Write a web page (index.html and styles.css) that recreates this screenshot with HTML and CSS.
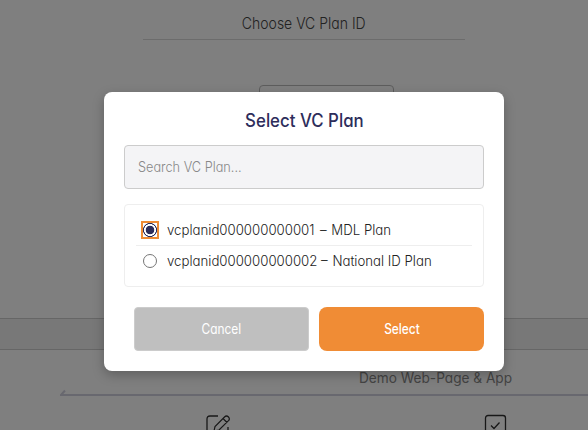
FILE: index.html
```html
<!DOCTYPE html>
<html lang="en">
<head>
<meta charset="utf-8">
<title>Select VC Plan</title>
<link rel="stylesheet" href="styles.css">
</head>
<body>
<main class="page">
  <section class="chooser">
    <h1 class="chooser-title"><span>Choose VC Plan ID</span></h1>
    <div class="chooser-button"></div>
  </section>
  <div class="band"></div>
  <section class="steps">
    <div class="steps-label"><span>Demo Web-Page &amp; App</span></div>
    <svg class="arrow" width="528" height="8" viewBox="0 0 528 8" fill="none"><path d="M528 7H1L5 2.500" stroke="#d0d0de" stroke-width="2"/></svg>
    <div class="icons">
      <svg class="icon" width="26" height="26" viewBox="0 0 26 26" fill="none" stroke="#303030" stroke-width="1.3"><path d="M13 2H5Q2 2 2 5V21Q2 24 5 24H20Q23 24 23 21V13"/><path d="M9 17L10 12.5L19.5 3Q21.5 1 23.5 3Q25.200 4.900 23.500 6.700L14 16L9 17ZM18 4.500L22 8.500" stroke-width="1.200"/></svg>
      <svg class="icon" width="24" height="24" viewBox="0 0 24 24" fill="none" stroke="#303030" stroke-width="1.300"><rect x="1.500" y="1.500" width="20" height="20.500" rx="2.500"/><path d="M7 11.500L10 14.500L15.500 8.500"/></svg>
    </div>
  </section>
</main>
<div class="overlay">
  <form class="modal">
    <h2 class="modal-title"><span>Select VC Plan</span></h2>
    <div class="search"><span>Search VC Plan...</span></div>
    <div class="plans">
      <label class="plan"><i class="radio checked"></i><span class="plan-name">vcplanid000000000001 <b class="dash wide">–</b> MDL Plan</span></label>
      <label class="plan"><i class="radio"></i><span class="plan-name">vcplanid000000000002 <b class="dash">–</b> National ID Plan</span></label>
    </div>
    <div class="actions">
      <button type="button" class="cancel"><span>Cancel</span></button>
      <button type="button" class="select"><span>Select</span></button>
    </div>
  </form>
</div>
</body>
</html>
```
FILE: styles.css
```css
* { box-sizing: border-box; }
body { margin: 0; width: 588px; height: 430px; overflow: hidden; position: relative; background: #fff; font-family: Inter, "Liberation Sans", sans-serif; font-feature-settings: "cv11"; font-weight: 300; color: #333; }
h1, h2 { margin: 0; font-weight: 400; }
span { display: inline-block; white-space: nowrap; }
.page { height: 430px; overflow: hidden; }
.chooser { height: 318px; padding-left: 143px; }
.chooser-title { width: 322px; height: 40px; padding-top: 12px; border-bottom: 1px solid #d8d8d8; font-size: 16px; font-weight: 300; line-height: 22px; text-align: center; color: #444; }
.chooser-title span { transform: scaleX(.875); }
.chooser-button { width: 135px; height: 44px; margin: 45px 0 0 116px; border: 1px solid #bbb; border-radius: 4px; }
.band { height: 32px; background: #f0f0f0; border: solid #ccc; border-width: 1px 0; }
.steps-label { height: 38px; padding: 18px 0 0 359px; font-size: 14px; font-weight: 400; line-height: 20px; color: #888; }
.steps-label span { transform: scaleX(.975); transform-origin: left; }
.arrow { display: block; margin-left: 60px; }
.icons { display: flex; gap: 253px; margin: 18px 0 0 205px; }
.icon { flex: none; }
.overlay { position: absolute; inset: 0; padding: 92px 84px 0 104px; background: rgba(0, 0, 0, .5); }
.modal { height: 279px; padding: 16px 20px 20px; background: #fff; border-radius: 8px; box-shadow: 0 4px 12px rgba(0, 0, 0, .25); }
.modal-title { height: 37px; font-size: 18px; font-weight: 500; line-height: 25px; text-align: center; color: #2d2d5b; }
.modal-title span { transform: scaleX(.935); }
.search { height: 44px; padding: 0 13px; border: 1px solid #ccc; border-radius: 4px; background: #f4f4f6; font-size: 14px; line-height: 42px; color: #888; }
.search span { transform: scaleX(.91); transform-origin: left; }
.plans { height: 83px; margin-top: 15px; padding: 10px 11px; border: 1px solid #eee; border-radius: 4px; }
.plan { display: flex; align-items: center; height: 31px; padding-left: 7px; font-size: 14px; line-height: 18px; color: #222; }
.plan:first-child { border-bottom: 1px solid #eee; }
.plan:last-child { height: 30px; }
.plan-name { margin-left: -1px; margin-bottom: 1px; transform: scaleX(.945); transform-origin: left; }
.dash { margin-right: 1px; font-weight: 300; }
.dash.wide { margin-left: 2px; }
.radio { flex: none; width: 14px; height: 14px; margin-right: 11px; border: 1px solid #767676; border-radius: 50%; }
.radio.checked { border: 0; border-radius: 0; background: radial-gradient(circle, #2d2d5b 0 4px, #fff 4.600px 5.700px, #2d2d5b 6.200px 6.800px, #fff 7.200px); outline: 2px solid #f08c35; }
.actions { display: flex; gap: 10px; margin: 20px 0 0 10px; }
.actions button { height: 44px; padding: 0 0 2px; border: 0; color: #fff; font: inherit; font-feature-settings: inherit; font-size: 14px; }
.actions .cancel { width: 175px; border: 1px solid #ccc; border-radius: 4px; background: #bfbfbf; font-weight: 400; }
.actions .select { width: 165px; border-radius: 8px; background: #f08c35; font-weight: 500; }
.actions span { transform: scaleX(.85); }
```
